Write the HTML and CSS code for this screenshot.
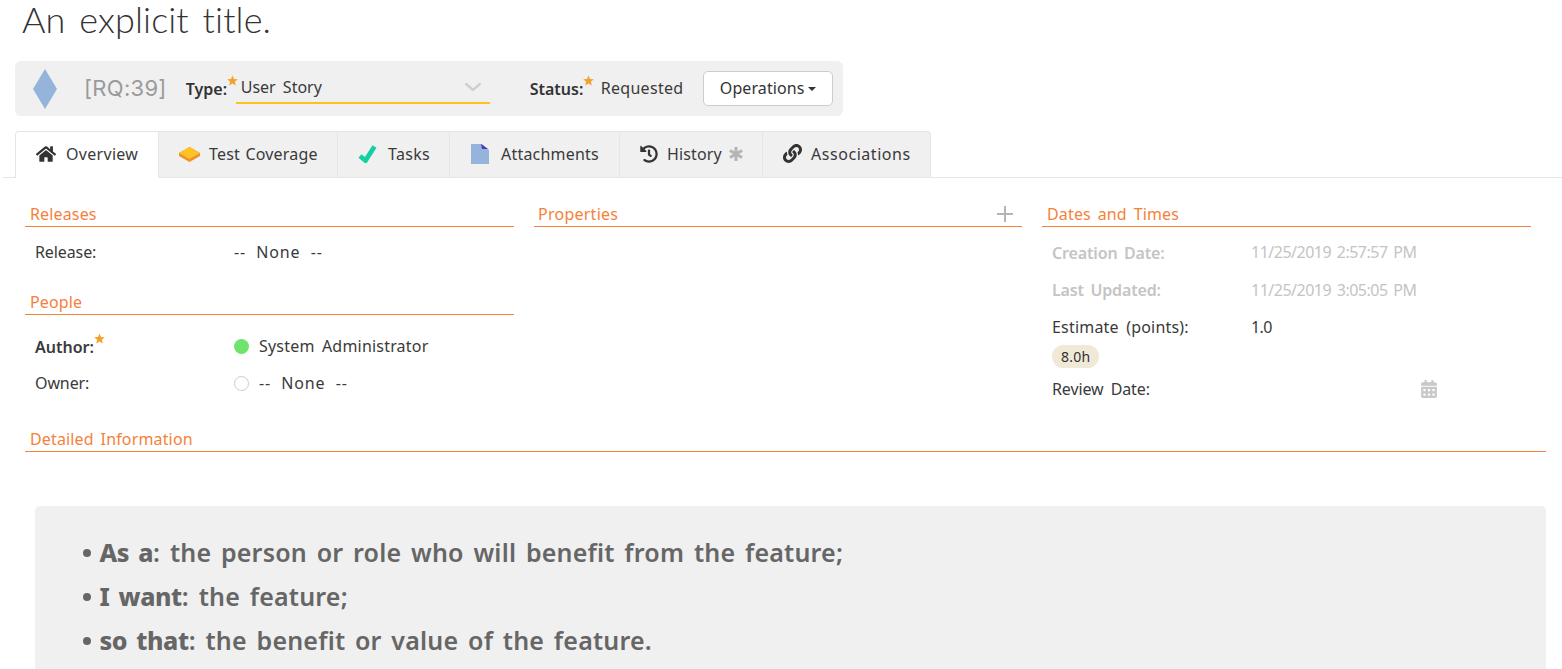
FILE: index.html
```html
<!DOCTYPE html>
<html lang="en">
<head>
<meta charset="utf-8">
<title>An explicit title.</title>
<link rel="stylesheet" href="styles.css">
</head>
<body>
<h1 class="title">An explicit title.</h1>

<div class="hdr">
  <svg class="diamond" width="24" height="40" viewBox="0 0 24 40"><polygon points="12,0 24,20 12,40 0,20" fill="#94b4dc"/></svg>
  <span class="token">[RQ:39]</span>
  <span class="req-label type-label">Type:<svg class="star" width="11" height="11" viewBox="0 0 24 24"><use href="#star"/></svg></span>
  <div class="select">
    <span>User Story</span>
    <svg width="18" height="10" viewBox="0 0 18 10"><path d="M1.5 1.5 9 8l7.5-6.5" fill="none" stroke="#cfcfcf" stroke-width="2.4"/></svg>
  </div>
  <span class="req-label status-label">Status:<svg class="star" width="11" height="11" viewBox="0 0 24 24"><use href="#star"/></svg></span>
  <span class="status-val">Requested</span>
  <button class="ops">Operations<i class="caret"></i></button>
</div>

<svg class="defs" width="0" height="0"><defs><path id="star" fill="#f5a22d" d="M12 1l3.3 7.5 8.2.8-6.2 5.4 1.9 8L12 18.5 4.8 22.700l1.900-8L.5 9.300l8.200-.8z"/></defs></svg>

<nav class="tabs">
  <a class="tab active tab-overview">
    <svg width="20" height="18" viewBox="0 0 576 512"><path fill="#333" d="M280.37 148.26L96 300.11V464a16 16 0 0 0 16 16l112.06-.29a16 16 0 0 0 15.92-16V368a16 16 0 0 1 16-16h64a16 16 0 0 1 16 16v95.64a16 16 0 0 0 16 16.05L464 480a16 16 0 0 0 16-16V300L295.67 148.26a12.19 12.19 0 0 0-15.3 0zM571.6 251.47L488 182.56V44.05a12 12 0 0 0-12-12h-56a12 12 0 0 0-12 12v72.61L318.47 43a48 48 0 0 0-61 0L4.34 251.47a12 12 0 0 0-1.6 16.9l25.5 31A12 12 0 0 0 45.15 301l235.22-193.74a12.19 12.19 0 0 1 15.3 0L530.9 301a12 12 0 0 0 16.9-1.6l25.5-31a12 12 0 0 0-1.7-16.93z"/></svg>
    Overview</a>
  <a class="tab tab-coverage">
    <svg width="21" height="16" viewBox="0 0 21 16"><polygon points="0,7 10.500,1 21,7 21,10 10.500,16 0,10" fill="#f0902c"/><polygon points="0,7 10.500,1 21,7 10.500,13" fill="#fdc223"/></svg>
    Test Coverage</a>
  <a class="tab tab-tasks">
    <svg width="19" height="18" viewBox="0 0 19 18"><path d="M2 11 7.500 15.500 16.500 1.500" fill="none" stroke="#12d0a0" stroke-width="4.800"/></svg>
    Tasks</a>
  <a class="tab tab-attach">
    <svg width="18" height="20" viewBox="0 0 18 20"><polygon points="0,0 11,0 18,6 18,20 0,20" fill="#94b4dc"/><polygon points="10,0 17,5 11,5" fill="#4a3fb0"/></svg>
    Attachments</a>
  <a class="tab tab-history">
    <svg width="18" height="18" viewBox="0 0 512 512"><path fill="#333" d="M504 255.531c.253 136.64-111.18 248.372-247.82 248.468-59.015.042-113.223-20.53-155.822-54.911-11.077-8.94-11.905-25.541-1.839-35.607l11.267-11.267c8.609-8.609 22.353-9.551 31.891-1.984C173.062 425.135 212.781 440 256 440c101.705 0 184-82.311 184-184 0-101.705-82.311-184-184-184-48.814 0-93.149 18.969-126.068 49.932l50.754 50.754c10.08 10.08 2.941 27.314-11.313 27.314H24c-8.837 0-16-7.163-16-16V38.627c0-14.254 17.234-21.393 27.314-11.314l49.372 49.372C129.209 34.136 189.552 8 256 8c136.81 0 247.747 110.78 248 247.531zm-180.912 78.784l9.823-12.63c8.138-10.463 6.253-25.542-4.21-33.679L288 256.349V152c0-13.255-10.745-24-24-24h-16c-13.255 0-24 10.745-24 24v135.651l65.409 50.874c10.463 8.137 25.541 6.253 33.679-4.21z"/></svg>
    History
    <svg class="asterisk" width="14" height="14" viewBox="0 0 14 14"><path d="M7 0v14M.9 3.500l12.200 7M.9 10.500l12.200-7" stroke="#b4b4b4" stroke-width="3"/></svg></a>
  <a class="tab tab-assoc">
    <svg width="19" height="19" viewBox="0 0 512 512"><path fill="#333" d="M326.612 185.391c59.747 59.809 58.927 155.698.36 214.59-.11.12-.24.25-.36.37l-67.2 67.2c-59.27 59.27-155.699 59.262-214.96 0-59.27-59.26-59.27-155.7 0-214.96l37.106-37.106c9.84-9.84 26.786-3.3 27.294 10.606.648 17.722 3.826 35.527 9.69 52.721 1.986 5.822.567 12.262-3.783 16.612l-13.087 13.087c-28.026 28.026-28.905 73.66-1.155 101.96 28.024 28.579 74.086 28.749 102.325.51l67.2-67.19c28.191-28.191 28.073-73.757 0-101.83-3.701-3.694-7.429-6.564-10.341-8.569a16.037 16.037 0 0 1-6.947-12.606c-.396-10.567 3.348-21.456 11.698-29.806l21.054-21.055c5.521-5.521 14.182-6.199 20.584-1.731a152.482 152.482 0 0 1 20.522 17.197zM467.547 44.449c-59.261-59.262-155.69-59.27-214.96 0l-67.2 67.2c-.12.12-.25.25-.36.37-58.566 58.892-59.387 154.781.36 214.59a152.454 152.454 0 0 0 20.521 17.196c6.402 4.468 15.064 3.789 20.584-1.731l21.054-21.055c8.35-8.35 12.094-19.239 11.698-29.806a16.037 16.037 0 0 0-6.947-12.606c-2.912-2.005-6.64-4.875-10.341-8.569-28.073-28.073-28.191-73.639 0-101.83l67.2-67.19c28.239-28.239 74.3-28.069 102.325.51 27.75 28.3 26.872 73.934-1.155 101.96l-13.087 13.087c-4.35 4.35-5.769 10.79-3.783 16.612 5.864 17.194 9.042 34.999 9.69 52.721.509 13.906 17.454 20.446 27.294 10.606l37.106-37.106c59.271-59.259 59.271-155.699.001-214.959z"/></svg>
    Associations</a>
</nav>

<main class="columns">
  <div class="col">
    <section class="sec">
      <h2 class="sec-head">Releases</h2>
      <div class="row row-release"><span class="lbl">Release:</span><span class="val val-none">-- None --</span></div>
    </section>
    <section class="sec sec-people">
      <h2 class="sec-head">People</h2>
      <div class="row row-author"><span class="lbl lbl-req">Author:<svg class="star" width="11" height="11" viewBox="0 0 24 24"><use href="#star"/></svg></span><span class="val"><i class="dot dot-on"></i>System Administrator</span></div>
      <div class="row row-owner"><span class="lbl">Owner:</span><span class="val val-none"><i class="dot dot-off"></i>-- None --</span></div>
    </section>
  </div>
  <div class="col">
    <section class="sec">
      <h2 class="sec-head sec-head-plus">Properties<svg class="plus" width="16" height="16" viewBox="0 0 16 16"><path d="M8 0v16M0 8h16" stroke="#b4b4b4" stroke-width="2"/></svg></h2>
    </section>
  </div>
  <div class="col">
    <section class="sec">
      <h2 class="sec-head">Dates and Times</h2>
      <div class="row row-date"><span class="lbl lbl-muted">Creation Date:</span><span class="val val-date">11/25/2019 2:57:57 PM</span></div>
      <div class="row row-date"><span class="lbl lbl-muted">Last Updated:</span><span class="val val-date">11/25/2019 3:05:05 PM</span></div>
      <div class="row row-est"><span class="lbl lbl-est">Estimate (points):</span><span class="val val-num">1.0</span></div>
      <span class="pill">8.0h</span>
      <div class="row row-review"><span class="lbl">Review Date:</span>
        <svg class="cal" width="16" height="18" viewBox="0 0 448 512"><path fill="#c8c8c8" d="M0 464c0 26.5 21.5 48 48 48h352c26.5 0 48-21.5 48-48V192H0v272zm320-196c0-6.6 5.4-12 12-12h40c6.6 0 12 5.4 12 12v40c0 6.6-5.4 12-12 12h-40c-6.6 0-12-5.4-12-12v-40zm0 128c0-6.6 5.4-12 12-12h40c6.6 0 12 5.4 12 12v40c0 6.6-5.4 12-12 12h-40c-6.6 0-12-5.4-12-12v-40zM192 268c0-6.6 5.4-12 12-12h40c6.6 0 12 5.4 12 12v40c0 6.6-5.4 12-12 12h-40c-6.6 0-12-5.4-12-12v-40zm0 128c0-6.6 5.4-12 12-12h40c6.6 0 12 5.4 12 12v40c0 6.6-5.4 12-12 12h-40c-6.6 0-12-5.4-12-12v-40zM64 268c0-6.6 5.4-12 12-12h40c6.6 0 12 5.4 12 12v40c0 6.6-5.4 12-12 12H76c-6.6 0-12-5.4-12-12v-40zm0 128c0-6.6 5.4-12 12-12h40c6.6 0 12 5.4 12 12v40c0 6.6-5.4 12-12 12H76c-6.6 0-12-5.4-12-12v-40zM400 64h-48V16c0-8.8-7.2-16-16-16h-32c-8.8 0-16 7.2-16 16v48H160V16c0-8.8-7.2-16-16-16h-32c-8.800 0-16 7.2-16 16v48H48C21.5 64 0 85.5 0 112v48h448v-48c0-26.5-21.5-48-48-48z"/></svg>
      </div>
    </section>
  </div>
</main>

<section class="detail">
  <h2 class="sec-head">Detailed Information</h2>
  <div class="desc">
    <ul class="desc-list">
      <li><b>As a</b>: the person or role who will benefit from the feature;</li>
      <li><b>I want</b>: the feature;</li>
      <li><b>so that</b>: the benefit or value of the feature.</li>
    </ul>
  </div>
</section>
</body>
</html>
```
FILE: styles.css
```css
html, body { margin: 0; padding: 0; height: 669px; overflow: hidden; background: #fff; }
body { font-family: "Noto Sans", sans-serif; font-size: 16px; color: #3a3a3a; word-spacing: 3px; }
.defs { position: absolute; }
.title { margin: 0 0 0 22px; height: 61px; font-family: Lato, sans-serif; font-weight: 300; font-size: 36px; line-height: 38px; letter-spacing: .1px; word-spacing: 4px; color: #333; }

.hdr { display: flex; align-items: center; width: 828px; height: 55px; margin-left: 15px; background: #f0f0f0; border-radius: 6px; }
.diamond { margin-left: 18px; }
.token { margin-left: 27px; margin-top: -1px; font-family: Inter, sans-serif; font-size: 22px; color: #9a9a9a; letter-spacing: .3px; }
.req-label { font-weight: 600; color: #333; display: inline-flex; }
.type-label { margin-left: 19px; width: 50px; }
.star { flex: none; margin-top: -3px; }
.select { display: flex; justify-content: space-between; align-items: center; width: 254px; height: 30px; border-bottom: 2px solid #fcc222; margin-top: 1px; padding: 0 8px 2px 5px; box-sizing: border-box; }
.status-label { margin-left: 40px; width: 71px; }
.status-val { margin-top: -1px; width: 82px; letter-spacing: .3px; }
.ops { margin-left: 20px; width: 130px; height: 35px; padding: 0 0 2px; font: inherit; color: #333; background: #fff; border: 1px solid #ccc; border-radius: 5px; word-spacing: 0; letter-spacing: .1px; }
.caret { display: inline-block; margin-left: 3px; vertical-align: middle; border-top: 4px solid #333; border-left: 4.500px solid transparent; border-right: 4.500px solid transparent; }

.tabs { display: flex; height: 46px; margin: 15px 0 0 3px; padding-left: 12px; border-bottom: 1px solid #e6e6e6; }
.tab { display: flex; align-items: center; gap: 9px; height: 46px; padding: 0 0 2px 20px; box-sizing: border-box; background: #f0f0f0; border: 1px solid #e6e6e6; border-left: 0; border-bottom: 0; color: #3a3a3a; letter-spacing: .3px; word-spacing: 0; }
.tab.active { background: #fff; border-left: 1px solid #e6e6e6; border-radius: 4px 0 0 0; height: 47px; gap: 10px; padding-bottom: 3px; }
.tab-overview { width: 144px; }
.tab-coverage { width: 179px; letter-spacing: .2px; word-spacing: 1px; }
.tab-tasks { width: 112px; gap: 11px; }
.tab-attach { width: 170px; gap: 12px; padding-left: 21px; letter-spacing: .2px; }
.tab-history { width: 143px; gap: 9px; letter-spacing: .15px; }
.tab-assoc { width: 168px; border-radius: 0 4px 0 0; letter-spacing: .55px; }
.asterisk { margin-left: -2px; }

.columns { display: grid; grid-template-columns: 489px 488px 489px; column-gap: 20px; margin: 25px 0 0 25px; height: 225px; }
.sec-head { margin: 0; height: 24px; padding-left: 5px; font-size: 16px; font-weight: 400; line-height: 22px; letter-spacing: .15px; word-spacing: 2.5px; color: #f5813a; border-bottom: 1px solid #f5813a; box-sizing: border-box; }
.sec-head-plus { display: flex; justify-content: space-between; padding: 0 9px 0 4px; letter-spacing: .25px; }
.plus { margin-top: 3px; }
.row { display: flex; align-items: center; padding-left: 10px; height: 37px; margin-top: 7px; letter-spacing: .2px; }
.row-release { margin-top: 6px; }
.lbl { width: 199px; flex: none; letter-spacing: -.1px; }
.lbl-est { letter-spacing: .2px; }
.lbl-req { font-weight: 600; display: inline-flex; letter-spacing: 0; margin-top: 2px; }
.sec-people { margin-top: 21px; }
.row-author { margin-top: 12px; }
.row-owner { margin-top: 0; }
.val { display: inline-flex; align-items: center; white-space: pre; }
.val-none { letter-spacing: .8px; word-spacing: 5.5px; }
.dot { width: 15px; height: 15px; border-radius: 50%; margin: 2px 10px 0 0; box-sizing: border-box; }
.dot-on { background: #6fe36b; }
.dot-off { background: #fff; border: 1px solid #ccc; }
.row-date { color: #c4c4c4; margin-top: 0; }
.sec-head + .row-date { margin-top: 7px; }
.val-date { letter-spacing: -.5px; word-spacing: 2px; margin-top: -1px; }
.row-date + .row-date .val-date { margin-top: 0; }
.lbl-muted { font-weight: 600; letter-spacing: -.15px; word-spacing: 2.500px; }
.row-est { margin-top: 0; }
.val-num { letter-spacing: -.6px; }
.pill { display: inline-block; margin-left: 10px; padding: 0 9px; height: 23px; line-height: 23px; background: #f0e9d8; border-radius: 12px; font-size: 14px; letter-spacing: .25px; word-spacing: 0; color: #333; }
.row-review { margin-top: 2px; }
.cal { margin-left: 170px; }

.detail { margin-left: 25px; width: 1521px; }
.desc { margin: 54px 0 0 10px; height: 163px; background: #f0f0f0; border-radius: 5px 5px 0 0; }
.desc-list { margin: 0; padding: 24px 0 0 48px; list-style: none; font-size: 25px; font-weight: 600; line-height: 44px; letter-spacing: .2px; color: #666; }
.desc-list li::before { content: ""; display: inline-block; width: 8px; height: 8px; margin: 0 8.5px 4px 0; border-radius: 50%; background: #666; vertical-align: middle; }
.desc-list b { font-weight: 800; letter-spacing: -.4px; }
```
